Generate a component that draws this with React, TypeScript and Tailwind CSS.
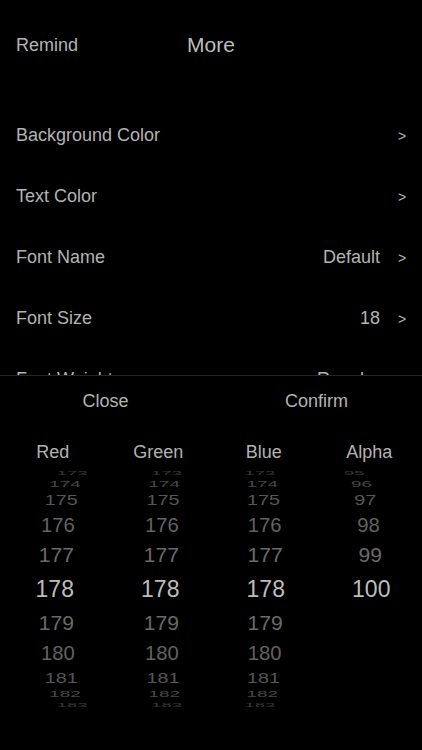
import React from "react";

type Row = { label: string; value?: string };

const rows: Row[] = [
  { label: "Background Color" },
  { label: "Text Color" },
  { label: "Font Name", value: "Default" },
  { label: "Font Size", value: "18" },
  { label: "Font Weight", value: "Regular" },
];

// wheel geometry, index = distance from the selected row
const OFFSET_Y = [0, 34, 64, 89, 105, 116];
const SCALE_Y = [1, 0.9, 0.84, 0.6, 0.4, 0.22];
const SCALE_X = [1, 0.92, 0.88, 0.86, 0.82, 0.8];
const SHIFT = [0, 0.01, 0.02, 0.041, 0.065, 0.11];
const SHADE = ["#bdbdbd", "#6a6a6a", "#626262", "#565656", "#484848", "#383838"];

const CENTER_Y = 111;

function Wheel({ values, selected, colCenter }: { values: number[]; selected: number; colCenter: number }) {
  return (
    <div className="relative h-[240px]">
      {values.map((v, i) => {
        const k = i - selected;
        const d = Math.abs(k);
        if (d > 5) return null;
        const dy = Math.sign(k) * OFFSET_Y[d];
        const dx = 2 + (211 - colCenter) * SHIFT[d];
        return (
          <div
            key={v}
            className="absolute left-0 right-0 h-[30px] text-center text-[23px] leading-[30px]"
            style={{
              top: CENTER_Y - 15 + dy,
              color: SHADE[d],
              transform: `translateX(${dx}px) scale(${SCALE_X[d]}, ${SCALE_Y[d]})`,
            }}
          >
            {v}
          </div>
        );
      })}
    </div>
  );
}

const range = (a: number, b: number) => Array.from({ length: b - a + 1 }, (_, i) => a + i);

const columns = [
  { name: "Red", values: range(173, 183), selected: 5 },
  { name: "Green", values: range(173, 183), selected: 5 },
  { name: "Blue", values: range(173, 183), selected: 5 },
  { name: "Alpha", values: range(95, 100), selected: 5 },
];

export default function App() {
  return (
    <div
      className="relative w-[422px] h-[750px] overflow-hidden bg-black text-[#b3b3b3]"
      style={{ fontFamily: '"Liberation Sans", Arial, sans-serif' }}
    >
      {/* Header */}
      <div className="grid grid-cols-3 items-center h-[90px]">
        <span className="pl-4 text-[18px]">Remind</span>
        <span className="text-center text-[21px] text-[#bdbdbd]">More</span>
        <span />
      </div>

      {/* Settings list */}
      <div className="mt-[15px]">
        {rows.map((r) => (
          <div key={r.label} className="flex items-center h-[61px] pl-4 pr-[17px] text-[18px]">
            <span className="flex-1">{r.label}</span>
            {r.value && <span>{r.value}</span>}
            <span className="w-[7px] ml-[18px] text-[14px] leading-none">&gt;</span>
          </div>
        ))}
      </div>

      {/* Color picker sheet */}
      <div className="absolute left-0 right-0 bottom-0 h-[375px] bg-black border-t border-[#262626]">
        <div className="grid grid-cols-2 h-[50px] items-center text-center text-[18px]">
          <span>Close</span>
          <span>Confirm</span>
        </div>
        <div className="grid grid-cols-4 h-[52px] items-center text-center text-[18px] leading-[52px]">
          {columns.map((c) => (
            <span key={c.name}>{c.name}</span>
          ))}
        </div>
        <div className="grid grid-cols-4">
          {columns.map((c, i) => (
            <Wheel key={c.name} values={c.values} selected={c.selected} colCenter={52.75 + i * 105.5} />
          ))}
        </div>
      </div>
    </div>
  );
}
